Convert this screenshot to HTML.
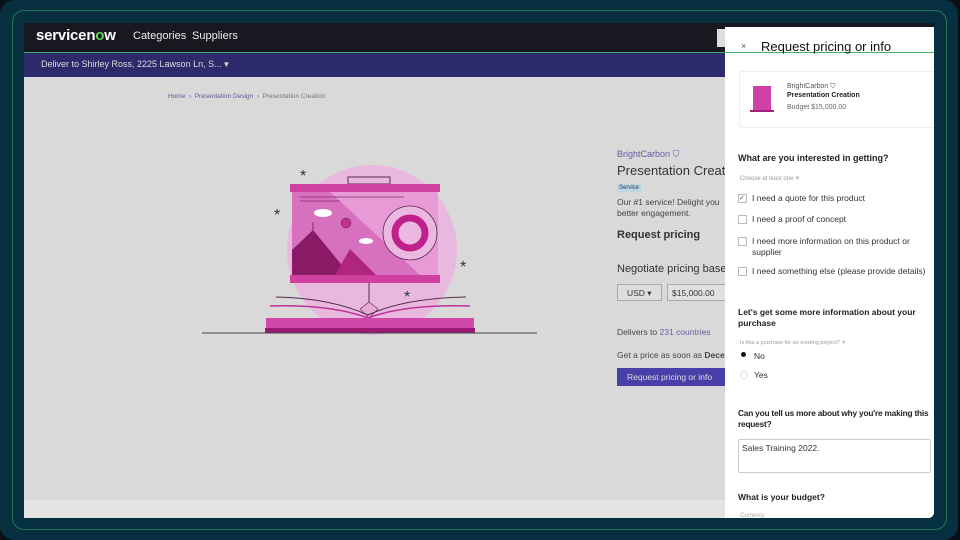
<!DOCTYPE html>
<html><head><meta charset="utf-8"><style>
*{margin:0;padding:0;box-sizing:border-box}
body{width:960px;height:540px;background:#0a0f14;font-family:"Liberation Sans",sans-serif;overflow:hidden;position:relative}
.outer{position:absolute;left:0;top:0;width:958px;height:540px;background:#06303f;border-radius:14px}
.frame{position:absolute;left:12px;top:10px;width:935px;height:520px;border:1px solid #1f7a5a;border-radius:12px}
.screen{position:absolute;left:24px;top:23px;width:910px;height:495px;background:#d9d9d9;overflow:hidden;border-radius:0 0 6px 0}
.abs{position:absolute}
.nav{left:0;top:0;width:910px;height:30px;background:#181820;border-bottom:1px solid #3fae6a}
.sub{left:0;top:30px;width:910px;height:24px;background:#2d2a6c}
.panel{position:absolute;left:725px;top:27px;width:209px;height:491px;background:#fff;border-radius:0 0 6px 0;overflow:hidden;color:#222}
.cb{position:absolute;width:9px;height:9px;border:1px solid #bbb;background:#fff}
.t{position:absolute;white-space:nowrap}
</style></head><body>
<div class="outer"></div><div class="frame"></div>
<div class="screen">
 <div class="abs nav"></div>
 <div class="t" style="left:12px;top:4px;color:#fff;font-weight:bold;font-size:15px;letter-spacing:-0.2px">servicen<span style="color:#62d84e">o</span>w</div>
 <div class="t" style="left:109px;top:7px;color:#eee;font-size:11px">Categories</div>
 <div class="t" style="left:168px;top:7px;color:#eee;font-size:11px">Suppliers</div>
 <div class="abs" style="left:693px;top:6px;width:20px;height:18px;background:#ddd"></div>
 <div class="abs sub"></div>
 <div class="t" style="left:17px;top:36px;color:#ddd;font-size:9px">Deliver to Shirley Ross, 2225 Lawson Ln, S... ▾</div>
 <div class="abs" style="left:0;top:477px;width:910px;height:18px;background:#e4e4e4"></div>
 <div class="t" style="left:144px;top:70px;color:#5a5a9a;font-size:6.5px">Home &nbsp;›&nbsp; Presentation Design &nbsp;<span style="color:#777">›&nbsp; Presentation Creation</span></div>
 <svg class="abs" style="left:166px;top:127px" width="360" height="200" viewBox="190 150 360 200">
  <circle cx="372" cy="250" r="85" fill="#e9b8df"/>
  <rect x="348" y="177" width="42" height="7" fill="none" stroke="#5a2a4a" stroke-width="1"/>
  <rect x="290" y="184" width="150" height="8" fill="#d0409e"/>
  <rect x="292" y="192" width="146" height="83" fill="#d870c0"/>
  <polygon points="330,192 438,192 438,275 420,275" fill="#e79ad6"/>
  <line x1="300" y1="197" x2="404" y2="197" stroke="#8a2a6a" stroke-width=".8"/>
  <line x1="300" y1="201" x2="340" y2="201" stroke="#8a2a6a" stroke-width=".8"/>
  <polygon points="292,275 292,250 313,230 350,275" fill="#8a1a66"/>
  <polygon points="335,275 350,249 376,275" fill="#b0267e"/>
  <line x1="313" y1="230" x2="313" y2="222" stroke="#5a2a4a" stroke-width=".8"/>
  <circle cx="346" cy="223" r="5" fill="#c03090" stroke="#6a1a50" stroke-width=".5"/>
  <circle cx="410" cy="233" r="27" fill="#eab8e0" stroke="#5a2a4a" stroke-width=".8"/>
  <circle cx="410" cy="233" r="15" fill="none" stroke="#c0208c" stroke-width="7"/>
  <ellipse cx="323" cy="213" rx="9" ry="4" fill="#fff"/>
  <ellipse cx="366" cy="241" rx="7" ry="3" fill="#fff"/>
  <rect x="290" y="275" width="150" height="8" fill="#d0409e"/>
  <line x1="369" y1="283" x2="369" y2="302" stroke="#5a2a4a"/>
  <polygon points="360,309 369,302 378,309 369,318" fill="#e8a8d8" stroke="#5a2a4a" stroke-width=".6"/>
  <path d="M276,297 Q330,298 368,315 Q405,298 466,297" fill="none" stroke="#5a2a4a"/>
  <path d="M270,306 Q330,304 368,318 Q405,304 470,306" fill="none" stroke="#c0309a" stroke-width="1.5"/>
  <rect x="266" y="318" width="208" height="10" fill="#d048a8"/>
  <rect x="265" y="328" width="210" height="5" fill="#9a1a74"/>
  <line x1="202" y1="333" x2="537" y2="333" stroke="#444" stroke-width="1"/>
  <g fill="#333" font-size="16" font-family="Liberation Sans"><text x="300" y="181">*</text><text x="274" y="220">*</text><text x="460" y="272">*</text><text x="404" y="302">*</text></g>
 </svg>
 <div class="t" style="left:593px;top:126px;color:#6a5aa8;font-size:9px">BrightCarbon ⛉</div>
 <div class="t" style="left:593px;top:140px;color:#333;font-size:13px">Presentation Creat</div>
 <div class="t" style="left:593px;top:161px;background:#bcd6e0;color:#336;font-size:6px;padding:1px 2px">Service</div>
 <div class="t" style="left:593px;top:174px;color:#444;font-size:8.5px;line-height:11px">Our #1 service! Delight you<br>better engagement.</div>
 <div class="t" style="left:593px;top:206px;color:#333;font-size:11px;font-weight:bold">Request pricing</div>
 <div class="t" style="left:593px;top:240px;color:#333;font-size:11px">Negotiate pricing base</div>
 <div class="abs" style="left:593px;top:261px;width:45px;height:17px;border:1px solid #aaa;background:#ddd;font-size:8.5px;color:#333;padding:3px 0 0 9px">USD ▾</div>
 <div class="abs" style="left:643px;top:261px;width:60px;height:17px;border:1px solid #aaa;background:#e0e0e0;font-size:8.5px;color:#333;padding:3px 0 0 4px">$15,000.00</div>
 <div class="t" style="left:593px;top:304px;color:#444;font-size:8.5px">Delivers to <span style="color:#6a5aa8">231 countries</span></div>
 <div class="t" style="left:593px;top:327px;color:#444;font-size:8.5px">Get a price as soon as <b>Decer</b></div>
 <div class="abs" style="left:593px;top:345px;width:108px;height:18px;background:#4840a8;color:#ddd;font-size:8.5px;padding:4px 0 0 10px">Request pricing or info</div>
</div>
<div class="panel">
 <div class="abs" style="left:0;top:25px;width:209px;height:1px;background:#3fae6a"></div>
 <div class="t" style="left:16px;top:14px;font-size:9px;color:#555">×</div>
 <div class="t" style="left:36px;top:12px;font-size:13px;color:#111">Request pricing or info</div>
 <div class="abs" style="left:14px;top:44px;width:200px;height:57px;border:1px solid #eee;border-radius:3px"></div>
 <div class="abs" style="left:28px;top:59px;width:18px;height:24px;background:#d040a8"></div>
 <div class="abs" style="left:25px;top:83px;width:24px;height:2px;background:#a02080"></div>
 <div class="t" style="left:62px;top:56px;font-size:7px;color:#555">BrightCarbon ⛉</div>
 <div class="t" style="left:62px;top:65px;font-size:7px;color:#222;font-weight:bold">Presentation Creation</div>
 <div class="t" style="left:62px;top:77px;font-size:7px;color:#666">Budget $15,000.00</div>
 <div class="t" style="left:13px;top:126px;font-size:9px;font-weight:bold">What are you interested in getting?</div>
 <div class="t" style="left:15px;top:148px;font-size:6px;color:#999">Choose at least one ✳</div>
 <div class="cb" style="left:13px;top:167px;font-size:7px;line-height:8px;color:#555">✓</div><div class="t" style="left:27px;top:166px;font-size:8.5px;color:#333">I need a quote for this product</div>
 <div class="cb" style="left:13px;top:188px"></div><div class="t" style="left:27px;top:187px;font-size:8.5px;color:#333">I need a proof of concept</div>
 <div class="cb" style="left:13px;top:210px"></div><div class="t" style="left:27px;top:209px;font-size:8.5px;color:#333;line-height:11px">I need more information on this product or<br>supplier</div>
 <div class="cb" style="left:13px;top:240px"></div><div class="t" style="left:27px;top:239px;font-size:8.5px;color:#333">I need something else (please provide details)</div>
 <div class="t" style="left:13px;top:280px;font-size:8.5px;font-weight:bold;line-height:11px">Let's get some more information about your<br>purchase</div>
 <div class="t" style="left:15px;top:313px;font-size:5.5px;color:#999">Is this a purchase for an existing project? ✳</div>
 <div class="abs" style="left:16px;top:325px;width:5px;height:5px;border-radius:50%;background:#111"></div>
 <div class="t" style="left:29px;top:324px;font-size:8.5px;color:#333">No</div>
 <div class="abs" style="left:15px;top:344px;width:8px;height:8px;border-radius:50%;border:1px solid #ddd"></div>
 <div class="t" style="left:29px;top:343px;font-size:8.5px;color:#333">Yes</div>
 <div class="t" style="left:13px;top:381px;font-size:8.3px;font-weight:bold;line-height:11px;letter-spacing:-0.2px">Can you tell us more about why you're making this<br>request?</div>
 <div class="abs" style="left:13px;top:412px;width:193px;height:34px;border:1px solid #ccc;border-radius:2px;font-size:8.5px;color:#333;padding:3px 3px">Sales Training 2022.</div>
 <div class="t" style="left:13px;top:465px;font-size:8.5px;font-weight:bold">What is your budget?</div>
 <div class="t" style="left:15px;top:486px;font-size:6px;color:#aaa">Currency</div>
</div>
</body></html>
